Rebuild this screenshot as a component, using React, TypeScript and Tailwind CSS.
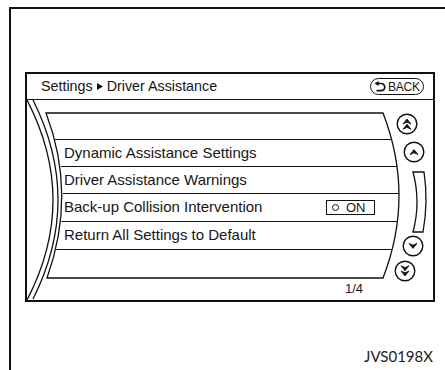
import React from "react";

const rows = [
  { label: "", h: "h-[27px]" },
  { label: "Dynamic Assistance Settings", h: "h-[27px]" },
  { label: "Driver Assistance Warnings", h: "h-[27px]" },
  { label: "Back-up Collision Intervention", h: "h-[28px]", toggle: true },
  { label: "Return All Settings to Default", h: "h-[28px]" },
  { label: "", h: "h-[28px]" },
];

const Dart = ({ cx, cy, up }: { cx: number; cy: number; up: boolean }) => {
  const s = up ? 1 : -1;
  return (
    <path
      d={`M${cx - 4} ${cy + 2.6 * s} L${cx} ${cy - 2.4 * s} L${cx + 4} ${cy + 2.6 * s} L${cx} ${cy + 0.8 * s} Z`}
      fill="#111"
      stroke="#111"
      strokeWidth="0.8"
      strokeLinejoin="round"
    />
  );
};

const ScrollButton = ({ cx, cy, up, double }: { cx: number; cy: number; up: boolean; double?: boolean }) => (
  <g>
    <circle cx={cx} cy={cy} r="9.8" fill="white" stroke="#111" strokeWidth="1.4" />
    {double ? (
      <>
        <Dart cx={cx} cy={cy - 2.6} up={up} />
        <Dart cx={cx} cy={cy + 2.6} up={up} />
      </>
    ) : (
      <Dart cx={cx} cy={cy} up={up} />
    )}
  </g>
);

const BackButton = () => (
  <div className="flex items-center h-[17px] w-[54px] rounded-full border-[1.5px] border-[#111] pl-[3px] gap-[2px]">
    <svg width="12" height="11" viewBox="0 0 12 11">
      <path d="M4 2.5 H7.2 A3.6 3.6 0 0 1 7.2 9.7 H2.5" fill="none" stroke="#111" strokeWidth="1.7" />
      <path d="M0.5 2.5 L4.6 0 L4.6 5 Z" fill="#111" />
    </svg>
    <span className="text-[12px] leading-none tracking-[-0.2px]">BACK</span>
  </div>
);

export default function App() {
  return (
    <div className="w-[445px] h-[370px] bg-white overflow-hidden font-['Liberation_Sans',Arial,sans-serif] text-[#161616]">
      <div className="ml-[9px] mt-[7px] h-[363px] border-l-2 border-t-2 border-[#111] flex flex-col">
        <div className="ml-[14px] mt-[63px] w-[410px] h-[230px] border-2 border-[#111] flex flex-col">
          {/* header */}
          <div className="h-[26px] border-b border-[#111] flex items-center justify-between pl-[14px] pr-[9px]">
            <div className="flex items-center gap-[4px] text-[14.3px]">
              <span>Settings</span>
              <svg width="6" height="7" viewBox="0 0 6 7">
                <path d="M0 0 L6 3.5 L0 7 Z" fill="#111" />
              </svg>
              <span>Driver Assistance</span>
            </div>
            <BackButton />
          </div>

          {/* body */}
          <div className="relative h-[200px] flex flex-col pt-[13px]">
            <div className="h-[165px] flex flex-col [clip-path:path('M19_0_L356_0_Q388_82.5_356_165_L20_165_Q52.5_81.5_19_0_Z')]">
              {rows.map((r, i) => (
                <div
                  key={i}
                  className={`${r.h} flex items-center pl-[37px] text-[15px] ${i < rows.length - 1 ? "border-b border-[#111]" : ""}`}
                >
                  <span>{r.label}</span>
                  {r.toggle && (
                    <div className="ml-auto mr-[58px] w-[49px] h-[15px] border-[1.5px] border-[#111] flex items-center pl-[5px] gap-[7px]">
                      <div className="w-[7px] h-[7px] rounded-full border-[1.3px] border-[#111]" />
                      <span className="text-[13px] leading-none">ON</span>
                    </div>
                  )}
                </div>
              ))}
            </div>
            <div className="h-[22px] flex items-center justify-end pr-[70px] text-[13px]">1/4</div>

            <svg
              className="absolute inset-0 pointer-events-none"
              width="406"
              height="200"
              viewBox="27 100 406 200"
            >
              <g fill="none" stroke="#111" strokeWidth="1.3">
                <path d="M27 100 Q79 200 27 300" />
                <path d="M33 100 Q83 200 33 299" />
                <path d="M46 113 L383 113 Q415 195.5 383 278 L47 278 Q77 194.5 46 113 Z" />
                <path d="M413 172 L424 172 Q428.5 202 423 232 L413 232 Q421 202 413 172 Z" />
              </g>
              <ScrollButton cx={407} cy={124} up double />
              <ScrollButton cx={414} cy={152} up />
              <ScrollButton cx={413} cy={246} up={false} />
              <ScrollButton cx={405} cy={271} up={false} double />
            </svg>
          </div>
        </div>
        <div className="mt-auto mb-[3px] self-end mr-[12px] font-['Lato','Open_Sans',sans-serif] text-[15px] text-[#222]">
          JVS0198X
        </div>
      </div>
    </div>
  );
}
